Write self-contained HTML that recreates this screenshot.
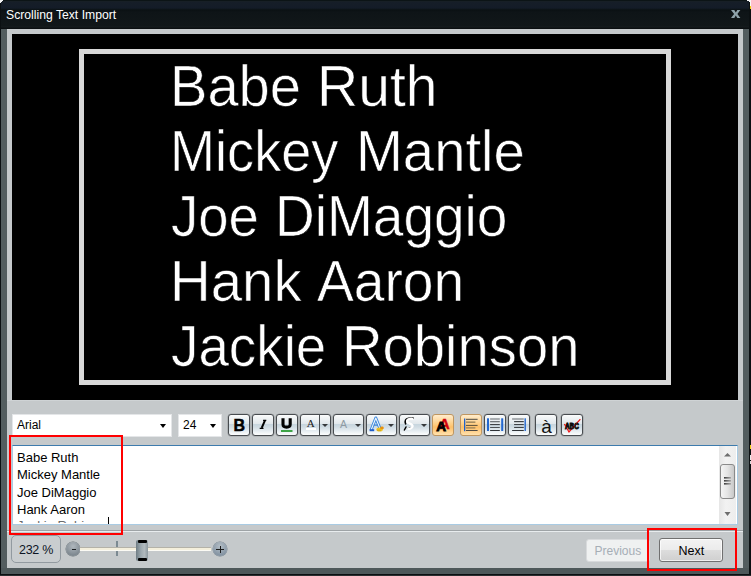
<!DOCTYPE html>
<html><head><meta charset="utf-8">
<style>
*{margin:0;padding:0;box-sizing:border-box}
html,body{width:751px;height:576px;overflow:hidden;background:#0b1012;font-family:"Liberation Sans",sans-serif}
.a{position:absolute}
#win{left:0;top:0;width:749px;height:576px;background:#535d5f;border-radius:6px 6px 0 0;overflow:hidden}
#edgeL{left:0;top:0;width:1px;height:576px;background:#0b1012}
#title{left:1px;top:0;width:748px;height:29px;background:linear-gradient(#0c1416 0,#0c1416 1px,#182024 1px,#161e28 2px,#141c28 8px,#0b1113 10px,#0e1417 12px,#111719 26px,#161c1e 27px,#0b0f11 28px,#0b0f11 29px)}
#ttext{left:6px;top:8px;color:#fff;font-size:12.2px;white-space:nowrap;letter-spacing:0}
#close{left:731px;top:9px;color:#8a9ca4;font-size:12px;font-weight:bold}
#panel{left:7px;top:29px;width:736px;height:539px;background:#c5c9cb}
#prev{left:12px;top:34px;width:726px;height:366px;background:#000}
#frame{left:79px;top:49px;width:592px;height:336px;border:5px solid #d9d9d9}
.big{position:absolute;-webkit-text-stroke:0.6px #000;color:#fff;font-size:56.6px;transform-origin:0 0;white-space:nowrap;line-height:65px}
#bottomline{left:7px;top:400px;width:736px;height:1px;background:#cfd3d5}
.combo{position:absolute;top:413.5px;height:23px;background:#fff;border:1px solid #e4e6e8}
.combo span{position:absolute;left:4px;top:3px;font-size:12px;color:#000}
.arr{position:absolute;top:424px;width:0;height:0;border-left:3.5px solid transparent;border-right:3.5px solid transparent;border-top:4px solid #000}
.btn{position:absolute;top:414px;height:22px;border:1px solid #484c50;border-radius:3px;background:linear-gradient(#fcfdfd 0px,#f3f6f7 2px,#e2e8ec 8.6px,#c6d5de 9.1px,#d0dce3 12px,#e6edf1 16px,#f5f8f9 18.5px,#fbfcfc 20px);overflow:hidden;box-shadow:0 0 0 0.35px rgba(70,74,78,.5)}
.g{position:absolute;line-height:1;white-space:nowrap}
.sv{position:absolute;left:-1px;top:-1px}
.ar{position:absolute;top:9px;width:0;height:0;border-left:3px solid transparent;border-right:3px solid transparent;border-top:3.5px solid #36393c}
.obtn{background:linear-gradient(#ffeccc 0px,#ffdca6 5px,#ffcb7c 10px,#fdc06a 12px,#ffd08a 16px,#ffe2ae 20px);border-color:#bf9660;box-shadow:none}
#ta{left:12px;top:445px;width:726px;height:80px;background:#fff;border:1px solid #a9cbe3;border-top-color:#3d7bad}
.st{position:absolute;left:17px;font-size:13px;color:#000;white-space:nowrap;line-height:17.3px}
#sep1{left:7px;top:530px;width:736px;height:1px;background:#9ea3a6}
#sep2{left:7px;top:531px;width:736px;height:1px;background:#e8ecee}
.red{position:absolute;border:2px solid #f00}
#botA{left:1px;top:568px;width:748px;height:6px;background:#4e585a}
#botB{left:0;top:574px;width:751px;height:1px;background:#0c1012}
#botC{left:0;top:575px;width:751px;height:1px;background:#2a2e30}
</style></head><body>
<div id="win" class="a"></div>
<div id="edgeL" class="a"></div>
<div id="title" class="a"></div>
<div id="ttext" class="a">Scrolling Text Import</div>
<svg class="a" style="left:731px;top:10px" width="10" height="8"><path d="M0 0H3.3L4.8 2.4L6.3 0H9.4L6.4 4L9.4 8H6.3L4.8 5.6L3.3 8H0L3.1 4Z" fill="#8ea2aa"/></svg>
<div id="panel" class="a"></div>
<div id="prev" class="a"></div>
<div id="frame" class="a"></div>
<div class="big" style="top:53.5px;left:170.05px;transform:scaleX(0.9903)">Babe</div>
<div class="big" style="top:53.5px;left:316.95px;transform:scaleX(1.0091)">Ruth</div>
<div class="big" style="top:118.5px;left:170.22px;transform:scaleX(0.9565)">Mickey</div>
<div class="big" style="top:118.5px;left:356.03px;transform:scaleX(0.9938)">Mantle</div>
<div class="big" style="top:183.5px;left:170.84px;transform:scaleX(0.9632)">Joe</div>
<div class="big" style="top:183.5px;left:275.14px;transform:scaleX(0.9723)">DiMaggio</div>
<div class="big" style="top:248.5px;left:170.02px;transform:scaleX(0.9960)">Hank</div>
<div class="big" style="top:248.5px;left:316.53px;transform:scaleX(0.9747)">Aaron</div>
<div class="big" style="top:313.5px;left:170.73px;transform:scaleX(0.9682)">Jackie</div>
<div class="big" style="top:313.5px;left:341.63px;transform:scaleX(0.9930)">Robinson</div>
<div id="bottomline" class="a"></div>

<!-- toolbar -->
<div class="combo" style="left:12px;width:160px"><span>Arial</span></div>
<div class="arr" style="left:160px"></div>
<div class="combo" style="left:178px;width:44px"><span style="left:4px">24</span></div>
<div class="arr" style="left:210px"></div>

<div class="btn" style="left:228px;width:22px"><span class="g" style="left:4.6px;top:2.6px;font-weight:bold;font-size:16px;-webkit-text-stroke:0.5px #000">B</span></div>
<div class="btn" style="left:252px;width:22px"><svg class="sv" width="22" height="22"><path d="M12.9 6.6 L9.7 13.9" stroke="#000" stroke-width="2"/><path d="M11.1 6.3h3.2M7.7 14.3h3.8" stroke="#000" stroke-width="1.3"/></svg></div>
<div class="btn" style="left:276px;width:22px"><svg class="sv" width="22" height="22"><path d="M7 4.3V10.3C7 12.9 8.5 13.1 10.6 13.1C12.7 13.1 14.2 12.9 14.2 10.3V4.3" fill="none" stroke="#000" stroke-width="3.1"/><rect x="5" y="16" width="11.5" height="2" fill="#3ea447"/></svg></div>
<div class="btn" style="left:300px;width:31px"><span class="g" style="left:5.8px;top:3.4px;font-family:'Liberation Serif',serif;font-size:11px;color:#1a1a1a">A</span><div class="a" style="left:5px;top:13px;width:10px;height:2px;background:#fff"></div><div class="a" style="left:18px;top:-1px;width:1px;height:22px;background:#4a4e52"></div><div class="ar" style="left:21px"></div></div>
<div class="btn" style="left:333px;width:31px"><span class="g" style="left:6px;top:4.4px;font-size:10.5px;color:#8e9aa2">A</span><div class="ar" style="left:21px"></div></div>
<div class="btn" style="left:366px;width:31px"><svg class="sv" width="31" height="22"><path d="M5 16.2 L9.8 4 L14.4 15.6" fill="none" stroke="#3c88de" stroke-width="3" stroke-linejoin="round"/><path d="M5 16.2 L9.8 4 L14.4 15.6" fill="none" stroke="#eef6fc" stroke-width="1.1" stroke-linejoin="round"/><path d="M7.6 11.2H12" stroke="#3c88de" stroke-width="1.3"/><rect x="3.6" y="15.2" width="4.6" height="2" fill="#1c5cc8"/><ellipse cx="13.6" cy="15.4" rx="3.2" ry="2" fill="#f0c424"/><ellipse cx="16" cy="13.9" rx="1.8" ry="1.3" fill="#e8900e"/><path d="M11 16.2h4" stroke="#b88a10" stroke-width="0.6"/></svg><div class="ar" style="left:21px"></div></div>
<div class="btn" style="left:399px;width:31px"><svg class="sv" width="31" height="22"><path d="M14 4.2C11 3.8 7.6 4 6.6 6.2C6 7.6 6.1 9 6.6 9.8" fill="none" stroke="#000" stroke-width="1.7" stroke-linecap="round"/><path d="M5.4 16L7 13" stroke="#000" stroke-width="1.5" stroke-linecap="round"/><path d="M9.4 14.4L11.6 13.6" stroke="#000" stroke-width="1.4" stroke-linecap="round"/><path d="M14.2 5C11.5 4.3 8 5 8.1 7.3C8.3 9.8 13.8 9.4 13.6 12.2C13.4 14.6 10.4 15 8.4 14.4" fill="none" stroke="#fff" stroke-width="2.3"/></svg><div class="ar" style="left:21px"></div></div>
<div class="btn obtn" style="left:432px;width:22px"><span class="g" style="left:6.6px;top:1.6px;font-weight:bold;font-size:14px;color:#d0000c;-webkit-text-stroke:0.5px #d0000c">A</span><span class="g" style="left:3.2px;top:5px;font-weight:bold;font-size:13.6px;color:#000;-webkit-text-stroke:0.9px #000">A</span></div>
<div class="btn obtn" style="left:460px;width:22px"><svg class="sv" width="22" height="22"><rect x="4" y="4.5" width="1.3" height="12.7" fill="#1f62cc"/><rect x="6" y="4.8" width="11.6" height="1" fill="#4e4a44"/><rect x="6" y="7.5" width="9.4" height="1.3" fill="#927c54"/><rect x="6" y="10.9" width="11.6" height="1" fill="#5a4e3a"/><rect x="6" y="13.3" width="9.4" height="1.2" fill="#927c54"/><rect x="6" y="16" width="11.6" height="1" fill="#4e4a44"/></svg></div>
<div class="btn" style="left:484px;width:22px"><svg class="sv" width="22" height="22"><rect x="3" y="4.3" width="2" height="12.7" fill="#2468d0"/><rect x="17.2" y="4.3" width="2" height="12.7" fill="#2468d0"/><rect x="6.1" y="4.3" width="9.7" height="1.4" fill="#8c9094"/><rect x="6.1" y="7.3" width="9.7" height="0.9" fill="#3e4246"/><rect x="6.1" y="10" width="9.7" height="1.1" fill="#3e4246"/><rect x="6.1" y="13.1" width="9.7" height="0.9" fill="#3e4246"/><rect x="6.1" y="16" width="9.7" height="1" fill="#2e3236"/></svg></div>
<div class="btn" style="left:508px;width:22px"><svg class="sv" width="22" height="22"><rect x="16.5" y="4.3" width="1.4" height="12.7" fill="#2468d0"/><rect x="4.1" y="4.3" width="11.7" height="1.4" fill="#8c9094"/><rect x="6.1" y="7" width="9.7" height="1.2" fill="#3e4246"/><rect x="6.1" y="10" width="9.7" height="1.1" fill="#3e4246"/><rect x="6.1" y="12.9" width="9.7" height="1.1" fill="#3e4246"/><rect x="4.1" y="16" width="11.7" height="1" fill="#2e3236"/></svg></div>
<div class="btn" style="left:535px;width:22px"><span class="g" style="left:5.2px;top:1.5px;font-size:19px;color:#111">à</span></div>
<div class="btn" style="left:561px;width:22px"><svg class="sv" width="22" height="22"><path d="M3.4 10 L8 18 L19.2 5.4" fill="none" stroke="#f01818" stroke-width="1.3"/><text x="3.9" y="15" font-family="Liberation Sans" font-weight="bold" font-size="9" fill="#0c0c0c" stroke="#0c0c0c" stroke-width="0.9" textLength="14" lengthAdjust="spacingAndGlyphs">ABC</text><path d="M3.4 10 L8 18 L19.2 5.4" fill="none" stroke="#f01818" stroke-width="0.9" stroke-dasharray="1 1.8" opacity="0.85"/></svg></div>
<!-- text area -->
<div id="ta" class="a"></div>
<div class="st" style="top:449px">Babe Ruth</div>
<div class="st" style="top:466px">Mickey Mantle</div>
<div class="st" style="top:484px">Joe DiMaggio</div>
<div class="st" style="top:501px">Hank Aaron</div>

<div id="sep1" class="a"></div>
<div id="sep2" class="a"></div>
<!-- scrollbar -->
<div class="a" style="left:719px;top:446px;width:17px;height:78px;background:linear-gradient(90deg,#e6e6e6,#f2f2f2 40%,#ededed)"></div>
<svg class="a" style="left:719px;top:446px" width="17" height="78">
<path d="M5 10.6 L8.5 7 L12 10.6Z" fill="#6e6e6e"/>
<rect x="1.5" y="18.5" width="14" height="34" rx="2.5" fill="url(#thg)" stroke="#8a8a8a"/>
<defs><linearGradient id="thg" x1="0" x2="1" y1="0" y2="0"><stop offset="0" stop-color="#f6f6f6"/><stop offset="0.5" stop-color="#e4e4e4"/><stop offset="1" stop-color="#c6c6c6"/></linearGradient>
<linearGradient id="grip" x1="0" x2="1"><stop offset="0" stop-color="#3a3a3a"/><stop offset="1" stop-color="#a8a8a8"/></linearGradient></defs>
<rect x="5" y="31" width="7" height="1.6" fill="url(#grip)"/>
<rect x="5" y="34" width="7" height="1.6" fill="url(#grip)"/>
<rect x="5" y="37" width="7" height="1.6" fill="url(#grip)"/>
<path d="M5.5 66 L8.5 70 L11.5 66Z" fill="#6e6e6e"/>
</svg>
<!-- cursor -->
<div class="a" style="left:108px;top:517px;width:1px;height:7px;background:#000"></div>
<div class="a" style="left:14px;top:519px;width:93px;height:4px;overflow:hidden"><div class="st" style="left:3px;top:-2px;color:#6a6a6a">Jackie Robinson</div></div>

<!-- bottom bar -->
<div class="a" style="left:11px;top:535px;width:50px;height:28px;border:1px solid #929aa0;border-radius:5px;background:#c9cdcf"></div>
<div class="a" style="left:19px;top:543px;font-size:12.5px;letter-spacing:-0.3px;color:#0c1424;white-space:nowrap;line-height:15px">232 %</div>
<div class="a" style="left:66px;top:542px;width:14px;height:14px;border-radius:50%;background:radial-gradient(circle at 50% 30%,#b0b8be,#7a848c 80%);box-shadow:0 0 0 0.5px #6a747a"></div>
<div class="a" style="left:71.5px;top:548.6px;width:4px;height:1.4px;background:#1e2226"></div>
<div class="a" style="left:80px;top:547px;width:131px;height:4px;background:linear-gradient(#b4b2a8 0,#b4b2a8 1px,#f4efdc 1px,#f4efdc 3px,#fbfaf4 3px)"></div>
<div class="a" style="left:116px;top:541px;width:2px;height:6px;background:#7c8a92"></div>
<div class="a" style="left:116px;top:551px;width:2px;height:5px;background:#7c8a92"></div>
<div class="a" style="left:136px;top:540px;width:12px;height:21px;border-radius:2px;background:linear-gradient(90deg,#6e7c84,#9ca8ae 40%,#b2babe 70%,#8c989e)"></div>
<div class="a" style="left:138px;top:540px;width:9px;height:2.5px;border-radius:1px;background:#000"></div>
<div class="a" style="left:138px;top:558px;width:9px;height:2.5px;border-radius:1px;background:#000"></div>
<div class="a" style="left:213px;top:542px;width:14px;height:14px;border-radius:50%;background:radial-gradient(circle at 50% 30%,#b4bec6,#8090a0 80%);box-shadow:0 0 0 0.5px #74828e"></div>
<div class="a" style="left:216px;top:548.5px;width:8px;height:1.5px;background:#1e1e1e"></div>
<div class="a" style="left:219.5px;top:546px;width:1.5px;height:7px;background:#1e1e1e"></div>

<div class="a" style="left:586px;top:539px;width:64px;height:23px;border:1px solid #d8dadc;border-radius:3px;background:#eff1f1"></div>
<div class="a" style="left:594.5px;top:544px;font-size:12px;color:#a6aeb6;white-space:nowrap;line-height:15px">Previous</div>
<div class="a" style="left:659px;top:538px;width:64px;height:24px;border:1px solid #707070;border-radius:3px;background:linear-gradient(#f3f3f3 0,#ebebeb 50%,#dddddd 50%,#cfcfcf 100%);box-shadow:inset 0 0 0 1px rgba(255,255,255,.7)"></div>
<div class="a" style="left:678.5px;top:544px;font-size:12.5px;color:#000;white-space:nowrap;line-height:15px">Next</div>


<div id="botA" class="a"></div>
<div id="botB" class="a"></div>
<div id="botC" class="a"></div>
<div class="a" style="left:0;top:0;width:3px;height:1px;background:#f4f4f4"></div>
<div class="a" style="left:0;top:1px;width:2px;height:1px;background:#f4f4f4"></div>
<div class="a" style="left:0;top:2px;width:1px;height:1px;background:#e8e8e8"></div>
<div class="a" style="left:747px;top:0;width:4px;height:1px;background:#f8f8f8"></div>
<div class="a" style="left:749px;top:1px;width:2px;height:1px;background:#f8f8f8"></div>
<div class="a" style="left:750px;top:2px;width:1px;height:4px;background:#f8f8f8"></div>
<div class="a" style="left:750px;top:6px;width:1px;height:3px;background:#f0d010"></div>
<div class="a" style="left:750px;top:445px;width:1px;height:4px;background:#f0d010"></div>
<div class="a" style="left:750px;top:455px;width:1px;height:5px;background:#e8e8e8"></div>
<div class="a" style="left:750px;top:461px;width:1px;height:3px;background:#d8d8d8"></div>
<div class="red" style="left:9px;top:435px;width:114px;height:100px"></div>
<div class="red" style="left:647px;top:528px;width:90px;height:43px"></div>
</body></html>
